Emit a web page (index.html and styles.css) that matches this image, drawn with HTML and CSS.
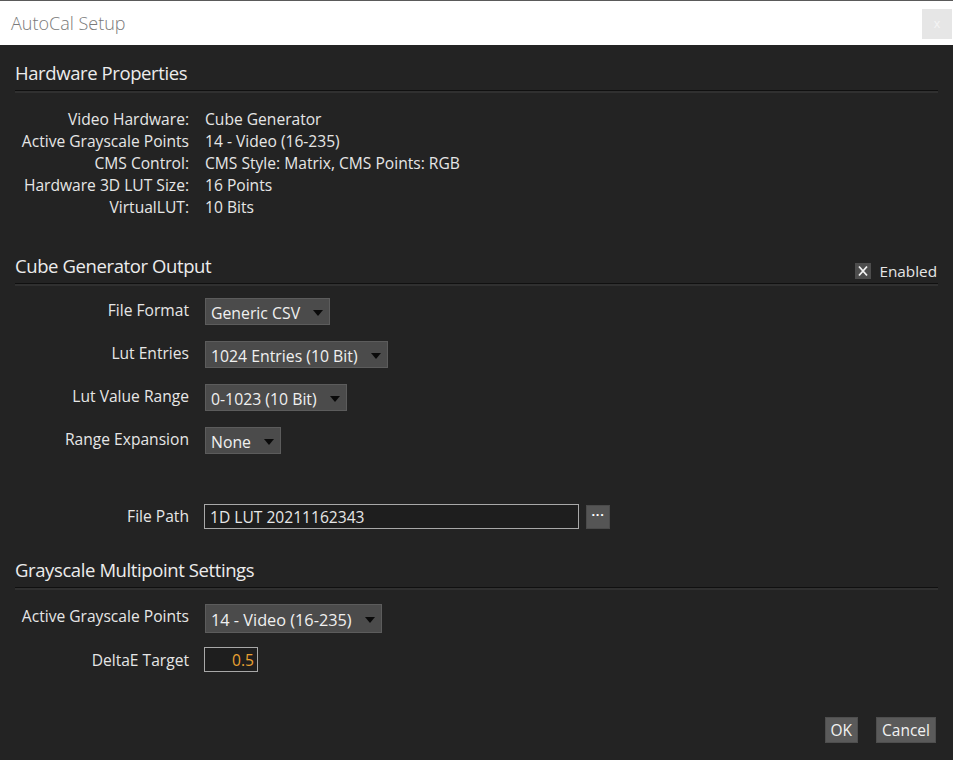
FILE: index.html
```html
<!DOCTYPE html>
<html>
<head>
	<title>AutoCal Setup</title>
	<meta charset="utf-8">
	<link rel="stylesheet" href="styles.css">
</head>
<body>

	<div class="titlebar">
		<span class="title">AutoCal Setup</span>
		<button class="close">x</button>
	</div>

	<div class="content">

		<div class="section-head">
			<h2>Hardware Properties</h2>
		</div>

		<div class="props">
			<span class="key">Video Hardware:</span><span>Cube Generator</span>
			<span class="key">Active Grayscale Points</span><span>14 - Video (16-235)</span>
			<span class="key">CMS Control:</span><span>CMS Style: Matrix, CMS Points: RGB</span>
			<span class="key">Hardware 3D LUT Size:</span><span>16 Points</span>
			<span class="key">VirtualLUT:</span><span>10 Bits</span>
		</div>

		<div class="section-head head-output">
			<h2>Cube Generator Output</h2>
			<label class="check">
				<span class="box">
					<svg width="16" height="16" viewBox="0 0 16 16"><path d="M4 3.5 L12 12.5 M12 3.5 L4 12.5" stroke="#f2f2f2" stroke-width="1.8" fill="none"/></svg>
				</span>
				Enabled
			</label>
		</div>

		<div class="form">
			<div class="row">
				<span class="label">File Format</span>
				<div class="select">Generic CSV<span class="arrow"></span></div>
			</div>
			<div class="row">
				<span class="label">Lut Entries</span>
				<div class="select">1024 Entries (10 Bit)<span class="arrow"></span></div>
			</div>
			<div class="row">
				<span class="label">Lut Value Range</span>
				<div class="select">0-1023 (10 Bit)<span class="arrow"></span></div>
			</div>
			<div class="row">
				<span class="label">Range Expansion</span>
				<div class="select">None<span class="arrow"></span></div>
			</div>
			<div class="row row-path">
				<span class="label">File Path</span>
				<div class="text-input path">1D LUT 20211162343</div>
				<button class="browse">&middot;&middot;&middot;</button>
			</div>
		</div>

		<div class="section-head head-gray">
			<h2>Grayscale Multipoint Settings</h2>
		</div>

		<div class="form form-gray">
			<div class="row row-points">
				<span class="label">Active Grayscale Points</span>
				<div class="select">14 - Video (16-235)<span class="arrow"></span></div>
			</div>
			<div class="row row-delta">
				<span class="label">DeltaE Target</span>
				<div class="text-input delta">0.5</div>
			</div>
		</div>

		<div class="actions">
			<button class="btn">OK</button>
			<button class="btn">Cancel</button>
		</div>

	</div>

</body>
</html>
```

FILE: styles.css
```css
*,
*:before,
*:after {
	box-sizing: border-box;
}

body {
	margin: 0;
	background-color: #232323;
	color: #e6e6e6;
	font-family: "Open Sans", "Noto Sans", sans-serif;
	font-size: 15.6px;
	height: 760px;
	overflow: hidden;
}

/**
 * Title bar
 */
.titlebar {
	height: 45px;
	background-color: #fff;
	border-top: 1px solid #5a5a5a;
	display: flex;
	align-items: center;
	justify-content: space-between;
	padding: 0 1px 0 11px;
}

.title {
	color: #7a7a7a;
	font-size: 18px;
	font-weight: 300;
}

.close {
	width: 30px;
	height: 30px;
	margin-top: 1px;
	background-color: #e6e6e6;
	border: 0;
	color: #f4f4f4;
	font-size: 13px;
	padding: 0;
}

/**
 * Sections
 */
.content {
	padding: 0 15px;
}

.section-head {
	display: flex;
	align-items: flex-end;
	justify-content: space-between;
	border-bottom: 1px solid #101010;
	box-shadow: 0 2px 0 #303030;
	padding-bottom: 5px;
	margin-top: 15px;
}

.section-head h2 {
	margin: 0;
	font-size: 18.5px;
	font-weight: 400;
	color: #ececec;
	letter-spacing: -0.4px;
}

.head-output {
	margin-top: 35px;
}

.head-gray {
	margin-top: 28px;
}

.check {
	display: flex;
	align-items: center;
	gap: 8px;
	font-size: 15.3px;
	margin-bottom: -3px;
	margin-right: 1px;
}

.check .box {
	width: 16px;
	height: 16px;
	background-color: #4d4d4d;
	display: block;
}

.check svg {
	display: block;
}

/**
 * Hardware properties
 */
.props {
	display: grid;
	grid-template-columns: 174px auto;
	column-gap: 16px;
	line-height: 22px;
	padding-top: 17px;
}

.props .key {
	text-align: right;
}

/**
 * Form rows
 */
.form {
	padding-top: 14px;
}

.form-gray {
	padding-top: 16px;
}

.row {
	display: flex;
	align-items: center;
	height: 27px;
	margin-bottom: 16px;
}

.label {
	width: 174px;
	text-align: right;
	margin-right: 16px;
	margin-top: -3px;
}

.select {
	height: 27px;
	background-color: #4b4b4b;
	border: 1px solid #5c5c5c;
	display: flex;
	align-items: center;
	padding: 2px 0 0 5px;
	font-size: 15.8px;
	color: #f0f0f0;
}

.arrow {
	width: 0;
	height: 0;
	border-left: 5px solid transparent;
	border-right: 5px solid transparent;
	border-top: 6px solid #0a0a0a;
	margin: 0 6px 0 13px;
}

.row-path {
	margin-top: 50px;
	height: 25px;
}

.row-path .label {
	margin-top: -1px;
}

.text-input {
	height: 25px;
	border: 1px solid #a8a8a8;
	background-color: #1e1e1e;
	padding: 1px 5px 0;
	display: flex;
	align-items: center;
	font-size: 15.6px;
}

.path {
	width: 375px;
	margin-left: -1px;
}

.browse {
	width: 24px;
	height: 24px;
	margin-left: 7px;
	background-color: #555;
	border: 1px solid #4a4a4a;
	color: #fff;
	font-size: 13px;
	font-weight: bold;
	padding: 0 0 4px;
	line-height: 1;
}

.row-points {
	height: 29px;
	margin-bottom: 13px;
}

.row-points .select {
	height: 29px;
	font-size: 16.3px;
}

.row-points .label {
	margin-top: -6px;
}

.delta {
	width: 54px;
	margin-left: -1px;
	justify-content: flex-end;
	color: #e8a132;
	padding-right: 3px;
}

.row-delta .label {
	margin-top: 0;
}

/**
 * Buttons
 */
.actions {
	display: flex;
	justify-content: flex-end;
	gap: 18px;
	padding-right: 2px;
	margin-top: 44px;
}

.btn {
	height: 26px;
	background-color: #5a5a5a;
	border: 1px solid #4e4e4e;
	color: #f2f2f2;
	font-family: "Open Sans", sans-serif;
	font-size: 15.5px;
	padding: 0 5px;
}
```
